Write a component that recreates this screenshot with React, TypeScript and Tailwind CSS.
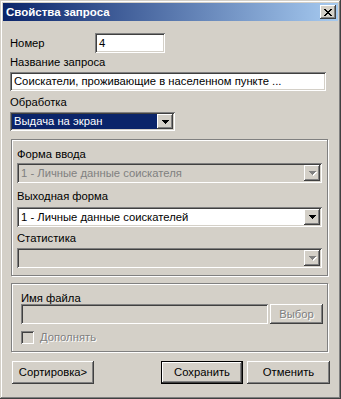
const raised =
  'shadow-[inset_-1px_-1px_#404040,inset_1px_1px_#ffffff,inset_-2px_-2px_#808080,inset_2px_2px_#d4d0c8]'
const sunken =
  'shadow-[inset_1px_1px_#808080,inset_-1px_-1px_#ffffff,inset_2px_2px_#404040,inset_-2px_-2px_#d4d0c8]'

function Arrow({ disabled }: { disabled?: boolean }) {
  return (
    <svg width="7" height="4" viewBox="0 0 7 4" className="block" style={disabled ? { filter: 'drop-shadow(1px 1px 0 #fff)' } : undefined}>
      <path d="M0 0h7v1H6v1H5v1H4v1H3V3H2V2H1V1H0z" fill={disabled ? '#808080' : '#000'} />
    </svg>
  )
}

function Combo({
  text,
  width,
  height,
  disabled,
  selected,
}: {
  text: string
  width: string
  height: string
  disabled?: boolean
  selected?: boolean
}) {
  return (
    <div
      className={`${width} ${height} ${sunken} ${disabled ? 'bg-[#d4d0c8]' : 'bg-white'} flex items-center p-[2px]`}
    >
      <div
        className={`flex-1 h-full flex items-center pl-[2px] ${
          selected ? 'bg-[#0a246a] text-white' : disabled ? 'text-[#808080]' : 'text-black'
        }`}
      >
        {text}
      </div>
      <div className={`w-[16px] h-full bg-[#d4d0c8] ${raised} flex items-center justify-center`}>
        <Arrow disabled={disabled} />
      </div>
    </div>
  )
}

function Button({ label, wide, isDefault }: { label: string; wide: string; isDefault?: boolean }) {
  return (
    <div
      className={`${wide} h-[23px] flex items-center justify-center ${
        isDefault ? 'border border-black' : ''
      }`}
    >
      <div className={`w-full h-full flex items-center justify-center ${raised}`}>{label}</div>
    </div>
  )
}

export default function App() {
  return (
    <div
      className={`w-[341px] h-[399px] bg-[#d4d0c8] p-[3px] text-[11.25px] leading-[13px] text-black shadow-[inset_-1px_-1px_#404040,inset_1px_1px_#d4d0c8,inset_-2px_-2px_#808080,inset_2px_2px_#ffffff]`}
      style={{ fontFamily: '"Liberation Sans", Arial, sans-serif' }}
    >
      <div className="h-[18px] flex items-center justify-between pl-[3px] pr-[2px] bg-[linear-gradient(to_right,#0a246a,#a6caf0)]">
        <span className="text-white font-bold text-[11.5px]">Свойства запроса</span>
        <div className={`w-[16px] h-[14px] bg-[#d4d0c8] ${raised} flex items-center justify-center`}>
          <svg width="8" height="7" viewBox="0 0 8 7">
            <path d="M0 0L7 7M1 0L8 7M7 0L0 7M8 0L1 7" stroke="#000" strokeWidth="1" />
          </svg>
        </div>
      </div>

      <div className="pl-[7px]">
        <div className="mt-[12px] h-[20px] flex items-center">
          <span className="w-[85px]">Номер</span>
          <div className={`w-[70px] h-[20px] bg-white ${sunken} flex items-center pl-[4px]`}>4</div>
        </div>

        <div className="mt-[3px] h-[13px]">Название запроса</div>
        <div className={`mt-[3px] w-[316px] h-[19px] bg-white ${sunken} flex items-center pl-[4px]`}>
          Соискатели, проживающие в населенном пункте ...
        </div>

        <div className="mt-[5px] h-[13px]">Обработка</div>
        <div className="mt-[3px]">
          <Combo text="Выдача на экран" width="w-[165px]" height="h-[19px]" selected />
        </div>

        <div className="mt-[8px] ml-[1px] w-[317px] h-[137px] border border-[#808080] shadow-[1px_1px_#ffffff,inset_1px_1px_#ffffff] pt-[8px] px-[5px]">
          <div className="h-[13px]">Форма ввода</div>
          <div className="mt-[2px]">
            <Combo text="1 - Личные данные соискателя" width="w-[305px]" height="h-[20px]" disabled />
          </div>
          <div className="mt-[7px] h-[13px]">Выходная форма</div>
          <div className="mt-[4px]">
            <Combo text="1 - Личные данные соискателей" width="w-[305px]" height="h-[20px]" />
          </div>
          <div className="mt-[5px] h-[13px]">Статистика</div>
          <div className="mt-[3px]">
            <Combo text="" width="w-[305px]" height="h-[20px]" disabled />
          </div>
        </div>

        <div className="mt-[7px] ml-[1px] w-[317px] h-[69px] border border-[#808080] shadow-[1px_1px_#ffffff,inset_1px_1px_#ffffff] pt-[8px] pl-[9px]">
          <div className="h-[12px] leading-[12px]">Имя файла</div>
          <div className="flex gap-[2px]">
            <div className={`w-[247px] h-[20px] bg-[#d4d0c8] ${sunken}`} />
            <div
              className={`w-[53px] h-[20px] flex items-center justify-center text-[#808080] ${raised} [text-shadow:1px_1px_0_#ffffff]`}
            >
              Выбор
            </div>
          </div>
          <div className="mt-[7px] flex items-center gap-[6px]">
            <div className={`w-[13px] h-[13px] bg-[#d4d0c8] ${sunken}`} />
            <span className="text-[#808080] [text-shadow:1px_1px_0_#ffffff]">Дополнять</span>
          </div>
        </div>

        <div className="mt-[9px] ml-[2px] flex">
          <Button label="Сортировка>" wide="w-[82px]" />
          <div className="w-[67px]" />
          <Button label="Сохранить" wide="w-[82px]" isDefault />
          <div className="w-[4px]" />
          <Button label="Отменить" wide="w-[83px]" />
        </div>
      </div>
    </div>
  )
}
